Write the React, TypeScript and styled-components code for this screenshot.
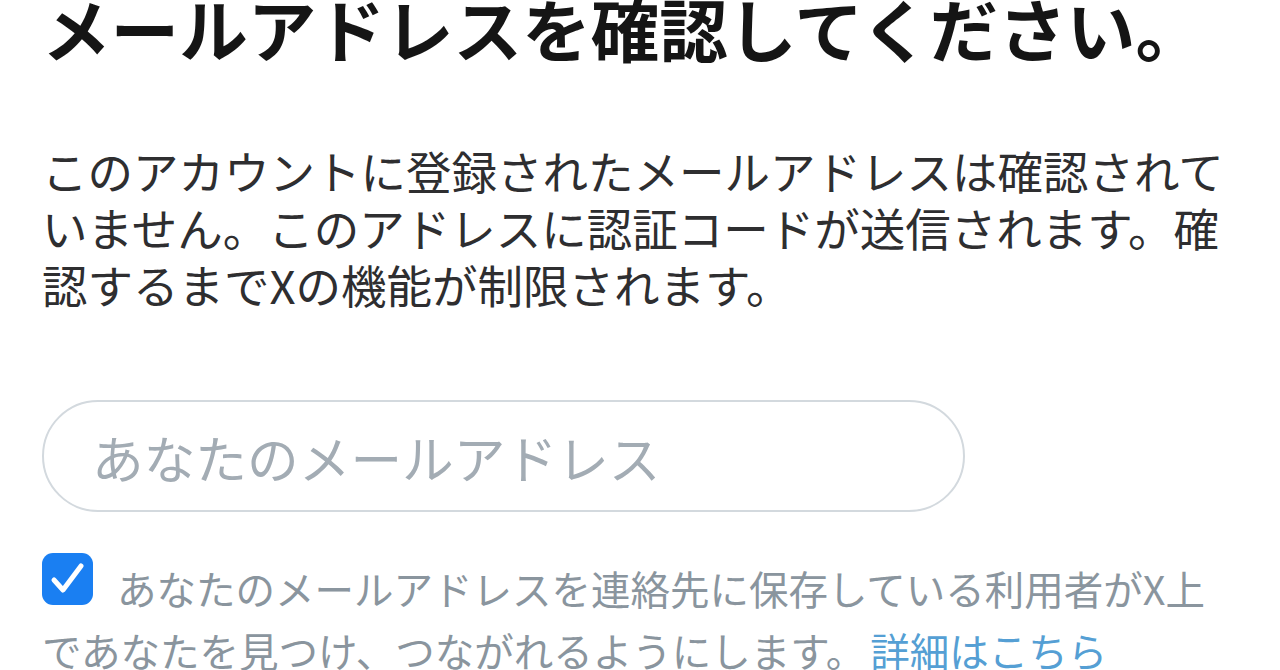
import React from "react";
import styled, { createGlobalStyle } from "styled-components";

const Global = createGlobalStyle`
  html, body {
    margin: 0;
    padding: 0;
    background: #ffffff;
  }
  body {
    font-family: "Noto Sans CJK JP", "Noto Sans", sans-serif;
    overflow: hidden;
  }
`;

const Page = styled.main`
  width: 1280px;
  height: 670px;
  overflow: hidden;
  box-sizing: border-box;
  padding: 0 0 0 42px;
  display: flex;
  flex-direction: column;
  & > * {
    flex-shrink: 0;
  }
`;

const Title = styled.h1`
  margin: -14px 0 0 0;
  font-size: 68.6px;
  line-height: 82px;
  font-weight: 700;
  color: #151515;
  letter-spacing: 0;
  white-space: nowrap;
`;

const Lead = styled.p`
  margin: 74px 0 0 0;
  width: 1200px;
  font-size: 45.5px;
  line-height: 57px;
  font-weight: 400;
  color: #2e2e30;
`;

const Field = styled.label`
  margin-top: 87px;
  width: 923px;
  height: 112px;
  box-sizing: border-box;
  border: 2px solid #d3d9de;
  border-radius: 56px;
  display: flex;
  align-items: center;
  padding-left: 48px;
`;

const Input = styled.input`
  border: none;
  outline: none;
  background: transparent;
  width: 100%;
  font-family: "Noto Sans CJK JP", "Noto Sans", sans-serif;
  font-size: 51.7px;
  color: #141414;
  padding: 0;
  &::placeholder {
    color: #a3acb4;
  }
`;

const Consent = styled.p`
  margin: 41px 0 0 0;
  width: 1170px;
  font-size: 39.5px;
  line-height: 62px;
  color: #8a959e;
`;

const Check = styled.span`
  display: inline-flex;
  align-items: center;
  justify-content: center;
  width: 51px;
  height: 52px;
  border-radius: 11px;
  background: #1a7ff2;
  vertical-align: 6px;
  margin-right: 24px;
`;

const More = styled.a`
  color: #559fd4;
  text-decoration: none;
  margin-left: 5px;
`;

export default function App() {
  return (
    <>
      <Global />
      <Page>
        <Title>メールアドレスを確認してください。</Title>
        <Lead>
          このアカウントに登録されたメールアドレスは確認されていません。このアドレスに認証コードが送信されます。確認するまでXの機能が制限されます。
        </Lead>
        <Field>
          <Input type="email" placeholder="あなたのメールアドレス" />
        </Field>
        <Consent>
          <Check role="checkbox" aria-checked="true">
            <svg width="40" height="40" viewBox="0 0 40 40" fill="none">
              <path
                d="M6 21 L15 31 L33 7"
                stroke="#ffffff"
                strokeWidth="5"
                strokeLinecap="round"
                strokeLinejoin="round"
              />
            </svg>
          </Check>
          あなたのメールアドレスを連絡先に保存している利用者がX上であなたを見つけ、つながれるようにします。
          <More href="#">詳細はこちら</More>
        </Consent>
      </Page>
    </>
  );
}
